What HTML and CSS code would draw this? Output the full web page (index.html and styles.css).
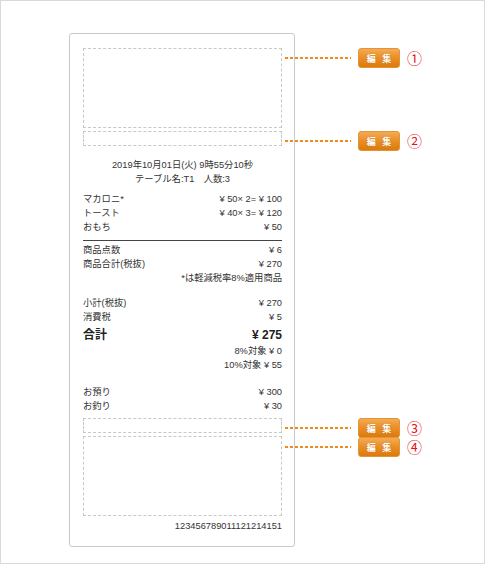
FILE: index.html
```html
<!DOCTYPE html>
<html lang="ja">
<head>
<meta charset="utf-8">
<link rel="stylesheet" href="styles.css">
</head>
<body>
<div class="frame">
  <div class="receipt">
    <div class="slot slot-large">
      <div class="callout"><span class="leader"></span><span class="btn">編 集</span><span class="num">①</span></div>
    </div>
    <div class="slot slot-small gap3">
      <div class="callout"><span class="leader"></span><span class="btn">編 集</span><span class="num">②</span></div>
    </div>

    <div class="head">
      <div class="center">2019年10月01日(火) 9時55分10秒</div>
      <div class="center">テーブル名:T1　人数:3</div>
    </div>

    <div class="items">
      <div class="row"><span>マカロニ*</span><span>¥ 50× 2= ¥ 100</span></div>
      <div class="row"><span>トースト</span><span>¥ 40× 3= ¥ 120</span></div>
      <div class="row"><span>おもち</span><span>¥ 50</span></div>
    </div>

    <div class="rule"></div>

    <div class="totals">
      <div class="row"><span>商品点数</span><span>¥ 6</span></div>
      <div class="row"><span>商品合計(税抜)</span><span>¥ 270</span></div>
      <div class="right">*は軽減税率8%適用商品</div>
    </div>

    <div class="sub">
      <div class="row"><span>小計(税抜)</span><span>¥ 270</span></div>
      <div class="row"><span>消費税</span><span>¥ 5</span></div>
      <div class="row grand"><span>合計</span><span>¥ 275</span></div>
      <div class="right">8%対象 ¥ 0</div>
      <div class="right">10%対象 ¥ 55</div>
    </div>

    <div class="pay">
      <div class="row"><span>お預り</span><span>¥ 300</span></div>
      <div class="row"><span>お釣り</span><span>¥ 30</span></div>
    </div>

    <div class="slot slot-small gap5">
      <div class="callout"><span class="leader"></span><span class="btn">編 集</span><span class="num">③</span></div>
    </div>
    <div class="slot slot-large gap3">
      <div class="callout c4"><span class="leader"></span><span class="btn">編 集</span><span class="num">④</span></div>
    </div>

    <div class="code right">123456789011121214151</div>
  </div>
</div>
</body>
</html>
```

FILE: styles.css
```css
* { box-sizing: border-box; }
html, body { margin: 0; padding: 0; background: #fff; }
body {
  font-family: "Liberation Sans", "Noto Sans CJK JP", sans-serif;
  color: #333;
  font-size: 9.3px;
}
.frame {
  width: 485px;
  height: 564px;
  border: 1px solid #d9d9d9;
  padding: 32px 0 0 68px;
}
.receipt {
  width: 226px;
  border: 1px solid #c9c9c9;
  border-radius: 3px;
  padding: 14px 12px 13px 13px;
}
.slot {
  position: relative;
  border: 1px dashed #c8c8c8;
}
.slot-large { height: 80px; }
.slot-small { height: 15px; }
.gap3 { margin-top: 3px; }
.gap5 { margin-top: 5px; }

.callout {
  position: absolute;
  top: -1px;
  left: calc(100% + 4px);
  height: 20px;
  display: flex;
  align-items: center;
}
.callout.c4 { top: 0; }
.leader {
  width: 66px;
  height: 2px;
  background: repeating-linear-gradient(to right, #ef8a1c 0 3px, transparent 3px 5px);
}
.btn {
  margin-left: 7px;
  width: 42px;
  height: 20px;
  border-radius: 3px;
  background: linear-gradient(to bottom, #f3ab55 0%, #e98e25 50%, #dc7a0c 100%);
  border: 1px solid #e39436;
  color: #fff;
  font-size: 9px;
  font-weight: bold;
  letter-spacing: 2px;
  display: flex;
  align-items: center;
  justify-content: center;
  padding-left: 2px;
  text-shadow: 0 0 1px rgba(160, 80, 0, 0.6);
}
.num {
  margin-left: 7px;
  color: #e8141b;
  font-family: "Noto Sans CJK JP", sans-serif;
  font-size: 15px;
  line-height: 20px;
}

.row {
  display: flex;
  justify-content: space-between;
  line-height: 14px;
  height: 14px;
}
.center { text-align: center; line-height: 14px; }
.right { text-align: right; line-height: 14px; }

.head { margin-top: 12px; }
.items { margin-top: 6px; }
.rule { margin-top: 6px; height: 1px; background: #444; }
.totals { margin-top: 2px; }
.sub { margin-top: 11px; }
.row.grand {
  margin-top: 2px;
  height: 18px;
  line-height: 18px;
  font-size: 12px;
  font-weight: bold;
  color: #222;
}
.pay { margin-top: 13px; }
.code { margin-top: 3px; }
```
